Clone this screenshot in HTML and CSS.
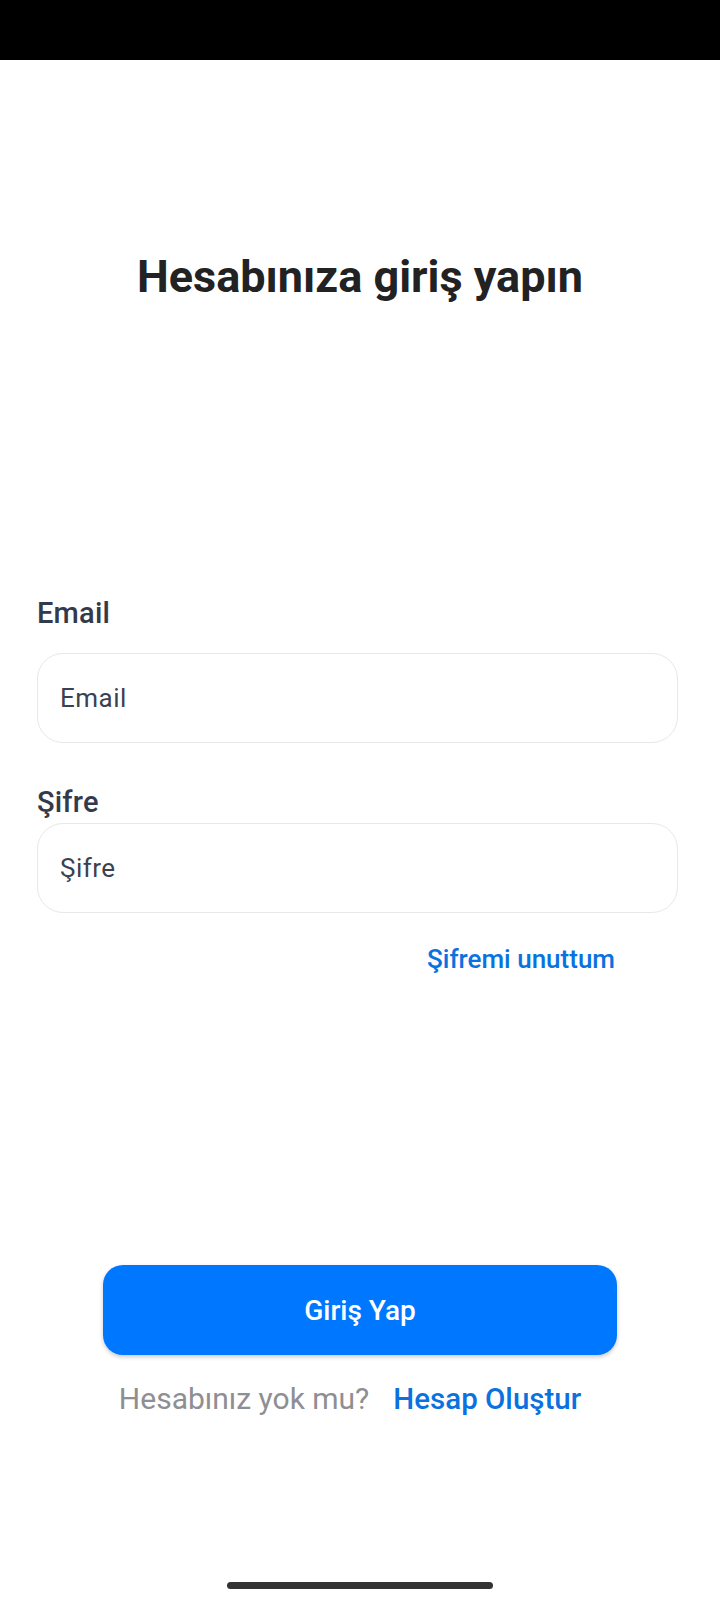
FILE: index.html
```html
<!DOCTYPE html>
<html lang="tr">
<head>
<meta charset="utf-8">
<title>Giriş</title>
<link rel="stylesheet" href="styles.css">
</head>
<body>
<div class="screen">
  <div class="status-bar"></div>
  <h1 class="title">Hesabınıza giriş yapın</h1>
  <form class="form">
    <label class="label label-email" for="email">Email</label>
    <input class="field" id="email" type="email" placeholder="Email">
    <label class="label label-pass" for="pass">Şifre</label>
    <input class="field" id="pass" type="password" placeholder="Şifre">
    <div class="forgot-row"><a class="forgot" href="#">Şifremi unuttum</a></div>
    <button class="submit" type="button">Giriş Yap</button>
  </form>
  <div class="signup-row">
    <span class="signup-q">Hesabınız yok mu?</span>
    <a class="signup-link" href="#">Hesap Oluştur</a>
  </div>
  <div class="home-indicator"></div>
</div>
</body>
</html>
```

FILE: styles.css
```css
* { box-sizing: border-box; }
html, body { margin: 0; padding: 0; background: #ffffff; }
body { font-family: Roboto, "Noto Sans", "Liberation Sans", sans-serif; }

.screen {
  width: 720px;
  min-height: 1600px;
  display: flex;
  flex-direction: column;
}

.status-bar {
  height: 60px;
  background: #000000;
  flex: none;
}

.title {
  margin: 190px 0 0;
  font-size: 45px;
  line-height: 54px;
  font-weight: 700;
  color: #222222;
  text-align: center;
}

.form {
  display: flex;
  flex-direction: column;
  padding: 0 42px 0 37px;
  margin-top: 292px;
}

.label {
  font-size: 29px;
  line-height: 34px;
  font-weight: 500;
  color: #323a4b;
  letter-spacing: 0.2px;
}
.label-email { margin-bottom: 23px; }
.label-pass { margin-top: 42px; margin-bottom: 4px; }

.field {
  height: 90px;
  width: 641px;
  border: 1.5px solid #e8e8e8;
  border-radius: 26px;
  padding: 0 22px;
  font-family: Roboto, "Noto Sans", sans-serif;
  font-size: 26px;
  color: #353d4d;
  background: #ffffff;
  outline: none;
  letter-spacing: 0.5px;
}
.field::placeholder { color: #3a4252; opacity: 1; }

.forgot-row {
  display: flex;
  justify-content: flex-end;
  margin-top: 31px;
  padding-right: 63px;
}
.forgot {
  font-size: 26px;
  line-height: 30px;
  font-weight: 500;
  color: #0a72df;
  text-decoration: none;
}

.submit {
  align-self: flex-start;
  margin: 291px 0 0 66px;
  width: 514px;
  height: 90px;
  border: none;
  border-radius: 20px;
  background: #0077ff;
  color: #ffffff;
  font-family: Roboto, "Noto Sans", sans-serif;
  font-size: 28px;
  font-weight: 500;
  box-shadow: 0 2px 4px rgba(0, 0, 0, 0.22);
}

.signup-row {
  display: flex;
  justify-content: center;
  align-items: baseline;
  gap: 24px;
  margin-top: 27px;
  padding-right: 20px;
  line-height: 34px;
}
.signup-q {
  font-size: 30px;
  color: #8e8e93;
}
.signup-link {
  font-size: 29.5px;
  font-weight: 500;
  color: #0a72df;
  text-decoration: none;
}

.home-indicator {
  align-self: center;
  width: 266px;
  height: 7px;
  margin-top: 166px;
  border-radius: 4px;
  background: #333333;
}
```
